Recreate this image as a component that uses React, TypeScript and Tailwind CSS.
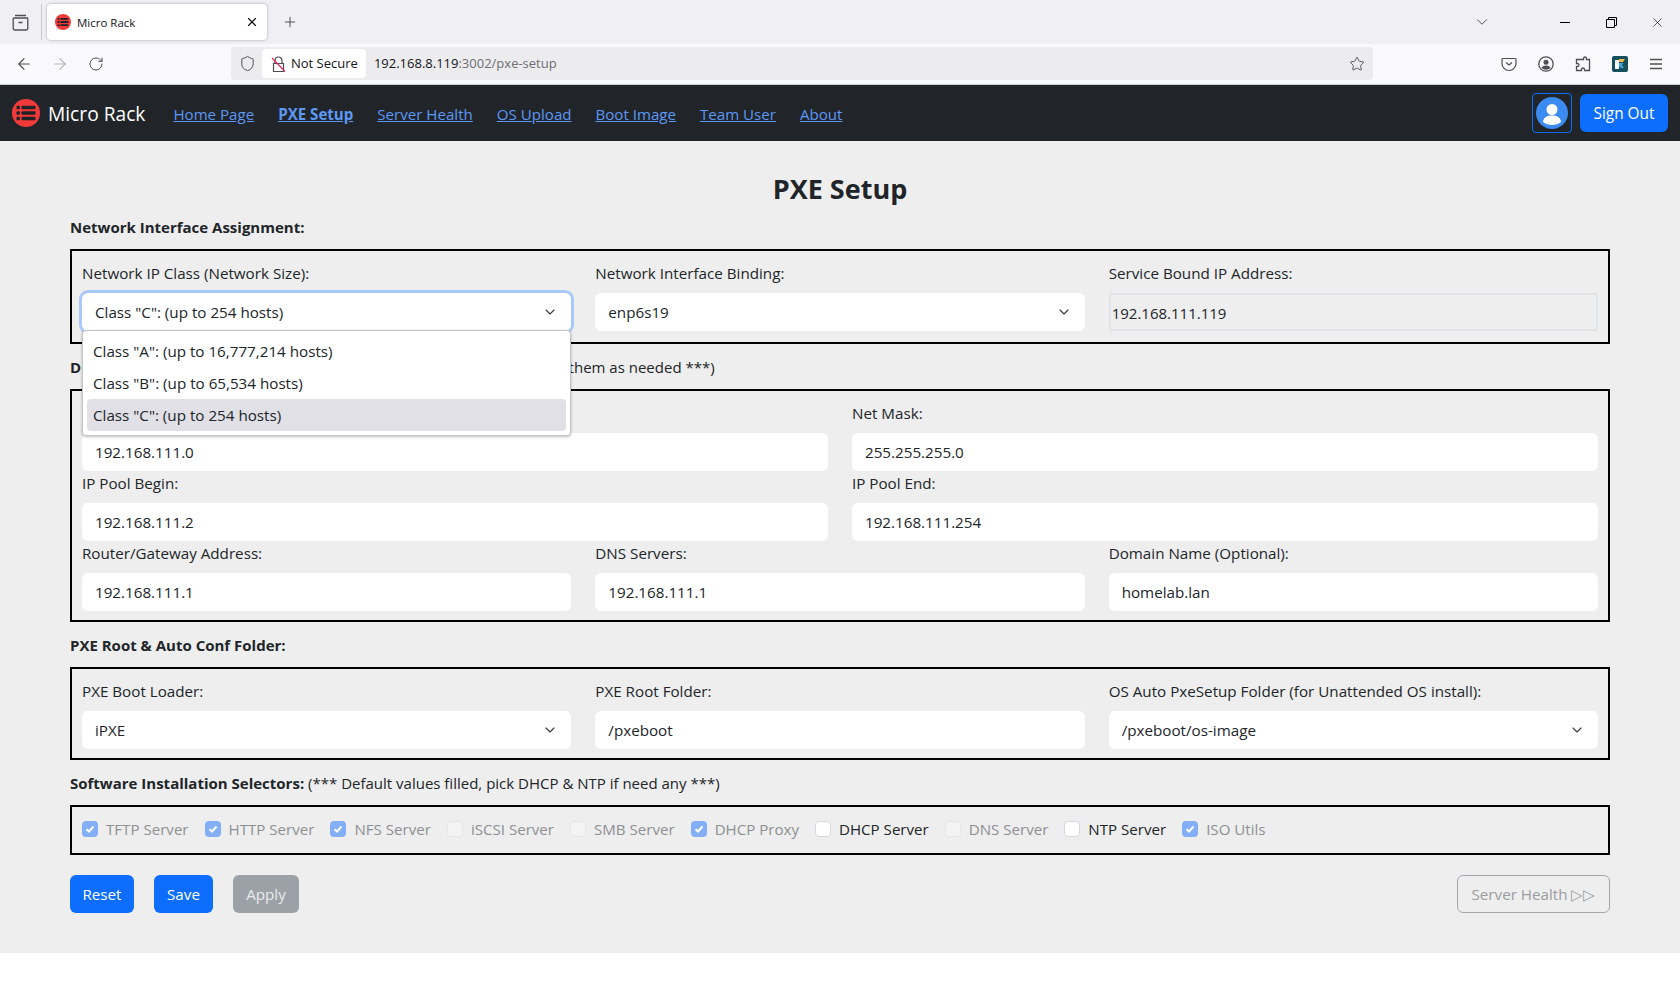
import { ArrowLeft, ArrowRight, ChevronDown, Plus, RotateCw, Shield, Star, X } from 'lucide-react';

const font = "font-['Open_Sans','Liberation_Sans',sans-serif]";

function LogoIcon({ size }: { size: number }) {
  return (
    <svg width={size} height={size} viewBox="0 0 28 28" className="shrink-0">
      <circle cx="14" cy="14" r="14" fill="#f33a3a" />
      {[8.5, 14, 19.5].map((y) => (
        <g key={y} fill="#1f2226">
          <rect x="4.5" y={y - 1.7} width="3.4" height="3.4" rx="1" />
          <rect x="9.5" y={y - 1.7} width="14" height="3.4" rx="1" />
        </g>
      ))}
    </svg>
  );
}

function TabStrip() {
  return (
    <div className="flex h-11 items-stretch bg-[#f0f0f4]">
      <div className="my-1 flex w-[42px] items-center justify-center border-r border-[#c8c8cc]">
        <svg width="17" height="17" viewBox="0 0 17 17" fill="none" stroke="#4e4e55" strokeWidth="1.3">
          <path d="M3 1.500h11M2 4h13a.8.8 0 0 1 .8.8v9.400a1.800 1.800 0 0 1-1.800 1.800H3a1.800 1.800 0 0 1-1.800-1.800V4.800A.8.8 0 0 1 2 4ZM6.500 8.500h4" />
        </svg>
      </div>
      <div className="ml-[5px] mt-1 flex h-9 w-[220px] items-center rounded bg-white pl-[8px] pr-[8px] shadow-[0_0_3px_rgba(0,0,0,0.3)]">
        <LogoIcon size={16} />
        <span className="ml-[6px] flex-1 pt-px text-[11.500px] text-[#15141a]">Micro Rack</span>
        <X size={14} strokeWidth={2} className="text-[#15141a]" />
      </div>
      <div className="ml-[15px] flex items-center">
        <Plus size={16} strokeWidth={1.5} className="text-[#4e4e55]" />
      </div>
      <div className="ml-auto flex items-center">
        <ChevronDown size={18} strokeWidth={1.3} className="mr-[51px] text-[#4e4e55]" />
        <div className="flex w-[46px] justify-center">
          <div className="h-px w-[10px] bg-black" />
        </div>
        <div className="flex w-[46px] justify-center">
          <svg width="11" height="11" viewBox="0 0 11 11" fill="none" stroke="#000" strokeWidth="1">
            <path d="M.5 2.500h8v8h-8zM2.500 2.500v-2h8v8h-2" />
          </svg>
        </div>
        <div className="flex w-[46px] justify-center">
          <X size={15} strokeWidth={1} className="text-black" />
        </div>
      </div>
    </div>
  );
}

function AddressBar() {
  return (
    <div className="flex h-[41px] items-center border-b border-[#d0d0d4] bg-[#f9f9fb] pb-px text-[#4e4e55]">
      <ArrowLeft size={18} strokeWidth={1.5} className="ml-[15px]" />
      <ArrowRight size={18} strokeWidth={1.5} className="ml-[18px] text-[#b5b5ba]" />
      <RotateCw size={16} strokeWidth={1.5} className="ml-[19px]" />
      <div className="ml-[127px] flex h-[33px] w-[1142px] items-center rounded bg-[#ececee] pl-2 pr-2">
        <Shield size={17} strokeWidth={1.4} />
        <div className="ml-[6px] flex h-[29px] items-center rounded bg-white pl-[9px] pr-2 pt-px text-[13px] text-[#15141a]">
          <svg width="15" height="17" viewBox="0 0 15 17" fill="none" stroke="#4e4e55" strokeWidth="1.2" className="mr-[5px]">
            <path d="M4 7V4.500a3.500 3.500 0 0 1 7 0V7M2.500 7.500h10v8h-10z" />
            <path d="M1 2l13 13.500" stroke="#e22850" />
          </svg>
          Not Secure
        </div>
        <span className="ml-2 flex-1 pt-px text-[13px] text-[#15141a]">
          192.168.8.119<span className="text-[#6e6e73]">:3002/pxe-setup</span>
        </span>
        <Star size={16} strokeWidth={1.4} />
      </div>
      <div className="ml-auto flex items-center pr-[17px]">
        <svg width="16" height="16" viewBox="0 0 16 16" fill="none" stroke="#4e4e55" strokeWidth="1.2" className="mr-[21px]">
          <path d="M2 2.500h12a1 1 0 0 1 1 1v4a7 7 0 0 1-14 0v-4a1 1 0 0 1 1-1ZM5 6.500l3 2.500 3-2.500" />
        </svg>
        <svg width="16" height="16" viewBox="0 0 16 16" className="mr-[21px]">
          <circle cx="8" cy="8" r="7.200" fill="none" stroke="#4e4e55" strokeWidth="1.300" />
          <circle cx="8" cy="6.200" r="2.500" fill="#4e4e55" />
          <path d="M3.500 12c1-2 2.500-2.600 4.500-2.600s3.500.6 4.500 2.600a7 7 0 0 1-9 0Z" fill="#4e4e55" />
        </svg>
        <svg width="16" height="16" viewBox="0 0 16 16" fill="none" stroke="#4e4e55" strokeWidth="1.3" className="mr-[21px]">
          <path d="M6.500 3.500h2v-1a1.500 1.500 0 0 1 3 0v1h3v11h-5v-1a1.500 1.500 0 0 0-3 0v1h-5v-4h1a1.500 1.500 0 0 0 0-3h-1v-4z" />
        </svg>
        <svg width="16" height="16" viewBox="0 0 16 16" className="mr-[21px]">
          <rect width="16" height="16" rx="2" fill="#14505e" />
          <path d="M3 4h4v9H3z" fill="#fff" />
          <path d="M7 3h6l-2 3H7z" fill="#f2b63c" />
          <path d="M7 7h4l-1 2 2 3H9l-2-2z" fill="#3fa9d8" />
        </svg>
        <svg width="14" height="12" viewBox="0 0 14 12" stroke="#4e4e55" strokeWidth="1.3">
          <path d="M1 1.500h12M1 6h12M1 10.500h12" />
        </svg>
      </div>
    </div>
  );
}

function Navbar() {
  const links = ['Home Page', 'PXE Setup', 'Server Health', 'OS Upload', 'Boot Image', 'Team User', 'About'];
  return (
    <nav className="flex h-14 items-center bg-[#212529] pl-3 pr-3">
      <LogoIcon size={28} />
      <span className="ml-2 pt-[2px] text-[19.200px] text-white">Micro Rack</span>
      <div className="ml-[28px] flex items-center gap-6 pt-[2px]">
        {links.map((l) => (
          <a key={l} className={`text-[15.100px] text-[#5c98f5] underline ${l === 'PXE Setup' ? 'font-bold' : ''}`}>
            {l}
          </a>
        ))}
      </div>
      <button className="ml-auto flex h-10 w-10 items-center justify-center rounded border border-[#0d6efd]">
        <svg width="32" height="32" viewBox="0 0 32 32">
          <circle cx="16" cy="16" r="16" fill="#3b8bf0" />
          <circle cx="16" cy="12.500" r="5.500" fill="#fff" />
          <path d="M7 25c.5-5 4-6.500 9-6.500s8.500 1.500 9 6.500c-2.500 2-5.500 3-9 3s-6.500-1-9-3Z" fill="#fff" />
        </svg>
      </button>
      <button className="ml-2 h-[38px] w-[88px] rounded-md bg-[#0d6efd] pt-[2px] text-[15.400px] text-white">Sign Out</button>
    </nav>
  );
}

function Field({ label, value }: { label: string; value: string }) {
  return (
    <div className="min-w-0 flex-1">
      <div className="mb-2 h-6 text-[15.200px] leading-6">{label}</div>
      <div className="flex h-[38px] items-center rounded-md bg-white px-[13px] text-[15.200px]">{value}</div>
    </div>
  );
}

function SelectField({ label, value, focused }: { label: string; value: string; focused?: boolean }) {
  return (
    <div className="min-w-0 flex-1">
      <div className="mb-2 h-6 text-[15.200px] leading-6">{label}</div>
      <div
        className={`flex h-[38px] items-center justify-between rounded-md bg-white pl-[13px] pr-[13px] text-[15.200px] ${
          focused ? 'shadow-[0_0_0_3px_#a9c9f8]' : ''
        }`}
      >
        {value}
        <ChevronDown size={16} strokeWidth={1.7} className="text-[#343a40]" />
      </div>
    </div>
  );
}

function ClassDropdown() {
  const options = ['Class "A": (up to 16,777,214 hosts)', 'Class "B": (up to 65,534 hosts)', 'Class "C": (up to 254 hosts)'];
  return (
    <div className="absolute left-[10px] top-[79px] z-10 w-[489px] rounded border border-[#c4c4c8] bg-white p-1 shadow-[0_1px_3px_rgba(0,0,0,0.25)]">
      {options.map((o, i) => (
        <div key={o} className={`flex h-8 items-center rounded-sm pl-[6px] text-[15.200px] ${i === 2 ? 'bg-[#e0e0e6]' : ''}`}>
          {o}
        </div>
      ))}
    </div>
  );
}

function Section({ children }: { children: React.ReactNode }) {
  return <div className="mb-[10px] mt-[11px] h-6 text-[15px] leading-6">{children}</div>;
}

function Check({ label, checked, disabled }: { label: string; checked?: boolean; disabled?: boolean }) {
  return (
    <label className="flex items-center gap-2">
      <span
        className={`flex h-4 w-4 items-center justify-center rounded ${
          checked ? 'bg-[#82aff8]' : disabled ? 'border border-[#e6e6e6] bg-[#f3f3f3]' : 'border border-[#d6d8e0] bg-white'
        }`}
      >
        {checked && (
          <svg width="10" height="10" viewBox="0 0 10 10" fill="none" stroke="#fff" strokeWidth="2">
            <path d="M1.500 5.200 4 7.500l4.500-5" />
          </svg>
        )}
      </span>
      <span className={disabled ? 'text-[#8d9093]' : 'text-[#212529]'}>{label}</span>
    </label>
  );
}

export default function App() {
  return (
    <div className={`${font} min-h-[1002px] bg-white text-[#212529]`}>
      <TabStrip />
      <AddressBar />
      <Navbar />
      <main className="bg-[#eeeeee] px-[70px] pb-10 pt-[31px]">
        <h1 className="mb-[9px] text-center text-[27px] font-bold leading-[34px]">PXE Setup</h1>

        <div className="mb-[10px] h-6 text-[15px] font-bold leading-6">Network Interface Assignment:</div>
        <div className="relative flex gap-6 border-2 border-black px-[10px] pb-[11px] pt-[10px]">
          <SelectField label="Network IP Class (Network Size):" value={'Class "C": (up to 254 hosts)'} focused />
          <SelectField label="Network Interface Binding:" value="enp6s19" />
          <div className="min-w-0 flex-1">
            <div className="mb-2 h-6 text-[15.200px] leading-6">Service Bound IP Address:</div>
            <div className="flex h-[38px] items-center border-2 border-[#e0e4e8] px-[1px] pt-[2px] text-[15px]">192.168.111.119</div>
          </div>
          <ClassDropdown />
        </div>

        <Section>
          <b>DHCP Server Configuration Setting:</b> (*** Default values filled, change them as needed ***)
        </Section>
        <div className="border-2 border-black px-[10px] pb-[9px] pt-[10px]">
          <div className="flex gap-6">
            <Field label="Subnet Address:" value="192.168.111.0" />
            <Field label="Net Mask:" value="255.255.255.0" />
          </div>
          <div className="flex gap-6">
            <Field label="IP Pool Begin:" value="192.168.111.2" />
            <Field label="IP Pool End:" value="192.168.111.254" />
          </div>
          <div className="flex gap-6">
            <Field label="Router/Gateway Address:" value="192.168.111.1" />
            <Field label="DNS Servers:" value="192.168.111.1" />
            <Field label="Domain Name (Optional):" value="homelab.lan" />
          </div>
        </div>

        <Section>
          <b>PXE Root &amp; Auto Conf Folder:</b>
        </Section>
        <div className="flex gap-6 border-2 border-black px-[10px] pb-[9px] pt-[10px]">
          <SelectField label="PXE Boot Loader:" value="iPXE" />
          <Field label="PXE Root Folder:" value="/pxeboot" />
          <SelectField label="OS Auto PxeSetup Folder (for Unattended OS install):" value="/pxeboot/os-image" />
        </div>

        <Section>
          <b>Software Installation Selectors:</b> (*** Default values filled, pick DHCP &amp; NTP if need any ***)
        </Section>
        <div className="flex h-[50px] items-center gap-4 border-2 border-black px-[10px] pb-[2px] text-[15.100px]">
          <Check label="TFTP Server" checked disabled />
          <Check label="HTTP Server" checked disabled />
          <Check label="NFS Server" checked disabled />
          <Check label="iSCSI Server" disabled />
          <Check label="SMB Server" disabled />
          <Check label="DHCP Proxy" checked disabled />
          <Check label="DHCP Server" />
          <Check label="DNS Server" disabled />
          <Check label="NTP Server" />
          <Check label="ISO Utils" checked disabled />
        </div>

        <div className="mt-[20px] flex items-center">
          <button className="h-[38px] w-16 rounded-md bg-[#0d6efd] text-[15.200px] text-white">Reset</button>
          <button className="ml-5 h-[38px] w-[59px] rounded-md bg-[#0d6efd] text-[15.200px] text-white">Save</button>
          <button className="ml-5 h-[38px] w-[66px] rounded-md bg-[#9ca1a8] text-[15.200px] text-[#e9eaec]">Apply</button>
          <button className="ml-auto h-[38px] w-[153px] rounded-md border border-[#a4a7ab] text-[15.200px] text-[#9a9da1]">
            Server Health ▷▷
          </button>
        </div>
      </main>
    </div>
  );
}
